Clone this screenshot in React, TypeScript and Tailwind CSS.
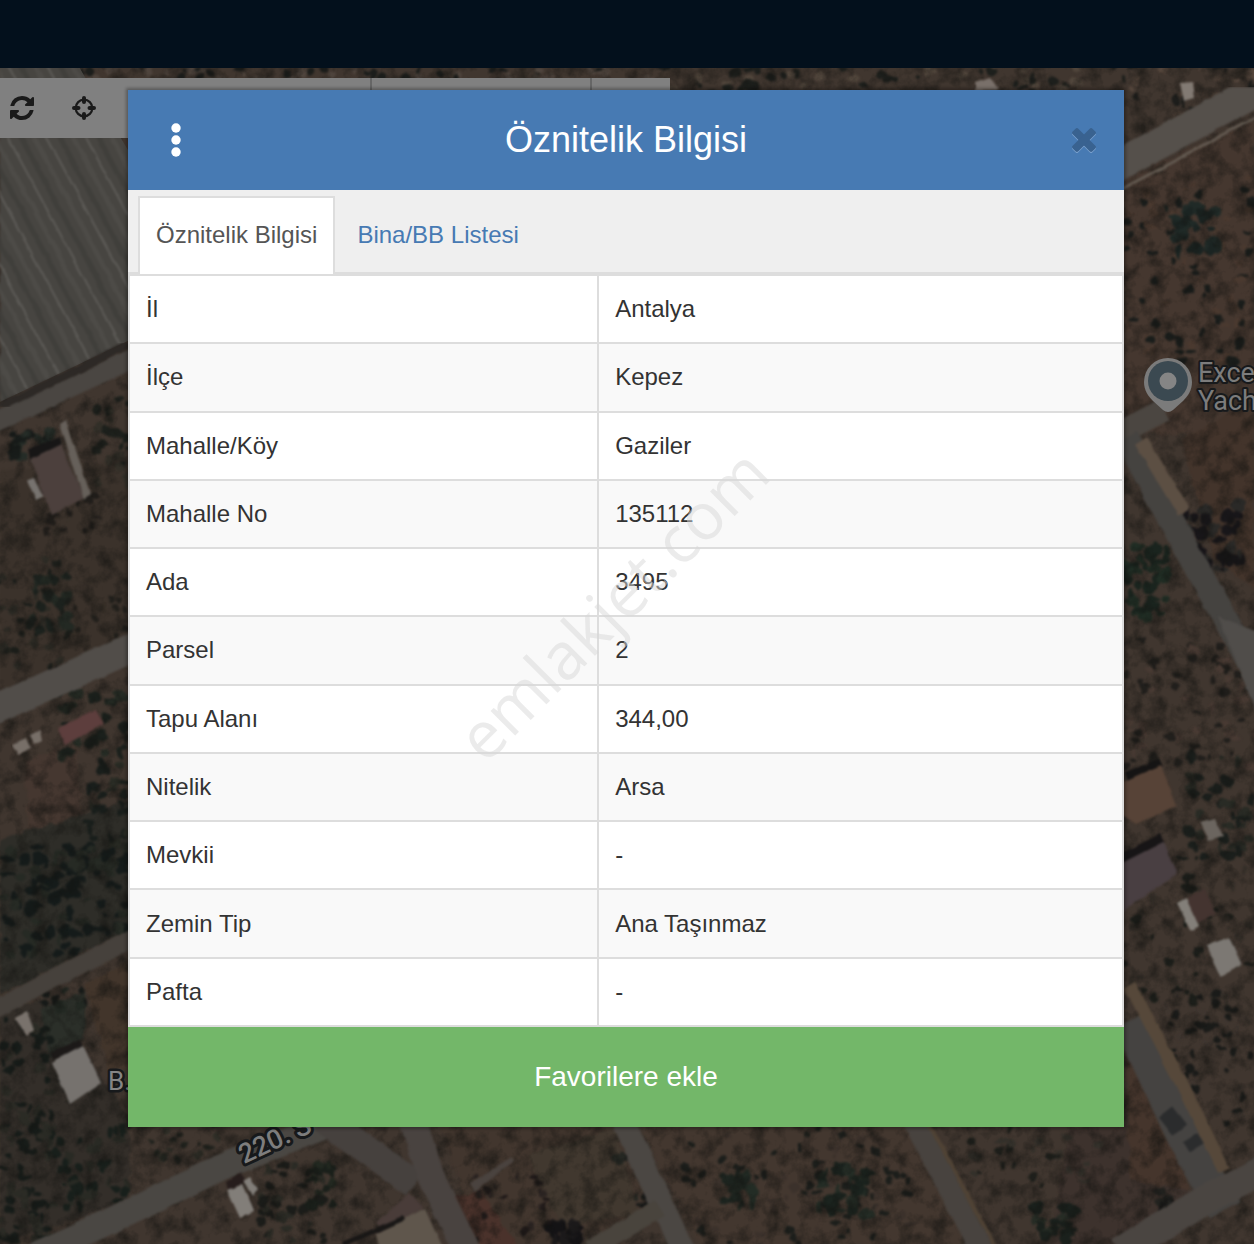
/**
 * Parcel query — attribute dialog shown over the satellite map
 */

import React, { useState } from "react";

interface Attribute {
  label: string;
  value: string;
}

const ATTRIBUTES: Attribute[] = [
  { label: "İl",          value: "Antalya" },
  { label: "İlçe",        value: "Kepez" },
  { label: "Mahalle/Köy", value: "Gaziler" },
  { label: "Mahalle No",  value: "135112" },
  { label: "Ada",         value: "3495" },
  { label: "Parsel",      value: "2" },
  { label: "Tapu Alanı",  value: "344,00" },
  { label: "Nitelik",     value: "Arsa" },
  { label: "Mevkii",      value: "-" },
  { label: "Zemin Tip",   value: "Ana Taşınmaz" },
  { label: "Pafta",       value: "-" },
];

const TABS = ["Öznitelik Bilgisi", "Bina/BB Listesi"];

/* ── Map scenery ─────────────────────────────────────────── */

// Small deterministic generator so the orchards look the same on every render
const makeRandom = (seed: number) => () => {
  seed = (seed * 1664525 + 1013904223) % 4294967296;
  return seed / 4294967296;
};

// [x, y, width, height, tree count, max radius, dark, light]
type Grove = [number, number, number, number, number, number, string, string];

const GROVES: Grove[] = [
  [75, 66, 600, 26, 90, 7, "#1b1d1b", "#4e443d"],
  [670, 66, 454, 26, 50, 7, "#1d1f1c", "#51463c"],
  [1124, 66, 130, 60, 25, 7, "#1d1d1b", "#55463c"],
  [1124, 175, 130, 190, 85, 6, "#1a1d1b", "#4a392f"],
  [1165, 200, 50, 55, 28, 9, "#1b2422", "#202a27"],
  [1185, 505, 55, 65, 40, 9, "#181619", "#2a2927"],
  [1124, 545, 45, 80, 40, 8, "#1a241e", "#202d24"],
  [1124, 640, 130, 130, 70, 6, "#211f1c", "#483a33"],
  [1180, 755, 74, 110, 45, 7, "#1b1f1c", "#292b25"],
  [1124, 855, 130, 150, 60, 6, "#1c1e1a", "#342e28"],
  [1165, 985, 89, 140, 55, 6, "#1a1b19", "#3f3630"],
  [5, 430, 50, 30, 25, 7, "#181c1a", "#252c27"],
  [95, 395, 35, 90, 22, 7, "#1d201c", "#322f28"],
  [45, 492, 55, 45, 22, 5, "#201d1a", "#3a322b"],
  [0, 560, 70, 110, 40, 6, "#1d1f1b", "#2d2b25"],
  [30, 575, 40, 55, 25, 7, "#1c211d", "#232923"],
  [70, 590, 58, 50, 14, 5, "#211f1b", "#3a3129"],
  [55, 690, 73, 70, 30, 8, "#1b201c", "#252b24"],
  [85, 750, 43, 100, 26, 7, "#191e1b", "#2a2c25"],
  [0, 845, 128, 110, 120, 8, "#151b1a", "#262a24"],
  [0, 1020, 50, 224, 90, 7, "#171c19", "#2b2b25"],
  [45, 990, 40, 20, 12, 6, "#171a18", "#222822"],
  [45, 1125, 85, 85, 45, 7, "#181f1b", "#292a24"],
  [150, 1120, 70, 40, 16, 6, "#20221d", "#2f2e27"],
  [260, 1165, 65, 79, 38, 7, "#1b1c19", "#2b2b25"],
  [310, 1160, 22, 45, 18, 7, "#1a1f1a", "#222820"],
  [470, 1175, 80, 69, 18, 6, "#201a19", "#2a2321"],
  [550, 1222, 30, 22, 24, 8, "#141315", "#1c1a1b"],
  [616, 1148, 14, 16, 7, 6, "#1a1c1a", "#252722"],
  [636, 1196, 20, 14, 7, 6, "#181a19", "#252722"],
  [680, 1128, 230, 116, 90, 6, "#1c1e1b", "#3b312b"],
  [725, 1175, 30, 30, 16, 9, "#1d241f", "#232c25"],
  [820, 1165, 50, 50, 32, 9, "#1b231e", "#242c25"],
  [970, 1128, 130, 60, 26, 6, "#1e1f1b", "#33302a"],
  [1030, 1205, 45, 39, 24, 8, "#1a201c", "#262c25"],
  [1158, 1190, 14, 22, 10, 7, "#171716", "#22221f"],
];

const trees = GROVES.flatMap(([x, y, w, h, count, size, dark, light], i) => {
  const rnd = makeRandom(i * 97 + 13);
  return Array.from({ length: count }, () => ({
    cx: Math.round(x + rnd() * w),
    cy: Math.round(y + rnd() * h),
    rx: 2 + rnd() * (size - 2),
    ry: 2 + rnd() * (size - 3),
    fill: rnd() > 0.4 ? dark : light,
  }));
});

const STRIPES = Array.from({ length: 26 }, (_, i) => -190 + i * 13);

const MapScene: React.FC = () => (
  <svg
    className="absolute inset-0 h-full w-full"
    viewBox="0 0 1254 1244"
    preserveAspectRatio="xMidYMin slice"
    aria-hidden="true"
  >
    <defs>
      <filter id="foliage" x="0" y="0" width="100%" height="100%" colorInterpolationFilters="sRGB">
        <feTurbulence type="fractalNoise" baseFrequency="0.09" numOctaves="2" seed="4" result="noise" />
        <feDisplacementMap in="SourceGraphic" in2="noise" scale="8" xChannelSelector="R" yChannelSelector="G" result="rough" />
        <feGaussianBlur in="rough" stdDeviation="1.2" />
      </filter>
      <filter id="soft" x="0" y="0" width="100%" height="100%" colorInterpolationFilters="sRGB">
        <feTurbulence type="fractalNoise" baseFrequency="0.05" numOctaves="2" seed="7" result="noise" />
        <feDisplacementMap in="SourceGraphic" in2="noise" scale="4" xChannelSelector="R" yChannelSelector="G" result="rough" />
        <feGaussianBlur in="rough" stdDeviation="1" />
      </filter>
      <filter id="grain" x="0" y="0" width="100%" height="100%" colorInterpolationFilters="sRGB">
        <feTurbulence type="fractalNoise" baseFrequency="0.06" numOctaves="4" seed="9" />
        <feColorMatrix values="0 0 0 0 0.07  0 0 0 0 0.07  0 0 0 0 0.06  2.2 0 0 0 -0.9" />
      </filter>
      <clipPath id="greenhouse">
        <path d="M0 60H75L122 140L134 160V338L0 402Z" />
      </clipPath>
    </defs>

    <rect width="1254" height="1244" fill="#40362f" />

    <g filter="url(#foliage)">
      {/* Bare fields */}
      <path d="M0 470L130 460V640L0 700Z" fill="#3b322b" />
      <path d="M25 760L75 745L85 840L30 850Z" fill="#453730" />
      <path d="M0 840L130 800V930L0 995Z" fill="#2e2d28" />
      <path d="M0 1010L50 1000L130 1120V1200L0 1244Z" fill="#332e29" />
      <path d="M85 985L130 960V1070H108Z" fill="#42352b" />
      <path d="M40 1010L85 992V1040L50 1058Z" fill="#2b2f29" />
      <path d="M1124 180L1254 120V440L1124 430Z" fill="#45372f" />
      <path d="M1180 440L1254 400V590L1215 560Z" fill="#43342b" />
      <path d="M440 1125H620L660 1210L560 1244H480Z" fill="#42362e" />
      <path d="M528 1155L615 1128L640 1215L560 1225Z" fill="#41382f" />
      <path d="M445 1200L480 1190L520 1250H475Z" fill="#4a322b" />
      <path d="M640 1125H910L985 1244H700Z" fill="#43372f" />
      <path d="M1070 1125H1160L1195 1210L1110 1244H1050Z" fill="#3d322d" />
      <path d="M1125 1050L1150 1090L1190 1190L1130 1180Z" fill="#45352c" />

      {trees.map((t, i) => (
        <ellipse key={i} cx={t.cx} cy={t.cy} rx={t.rx} ry={t.ry} fill={t.fill} />
      ))}
    </g>
    <rect width="1254" height="1244" filter="url(#grain)" opacity="0.6" />

    {/* Roads */}
    <g fill="none" filter="url(#soft)">
      <path d="M-10 424L136 357" stroke="#4a4642" strokeWidth="20" />
      <path d="M-10 712L136 646" stroke="#514d49" strokeWidth="29" />
      <path d="M-10 1012L60 975L136 937" stroke="#46413c" strokeWidth="18" />
      <path d="M20 1262L110 1221L220 1168L335 1122" stroke="#4a4743" strokeWidth="26" />
      <path d="M322 1118L415 1184" stroke="#46413e" strokeWidth="28" />
      <path d="M412 1118L432 1180L470 1256" stroke="#494340" strokeWidth="27" />
      <path d="M622 1118L655 1190L686 1256" stroke="#4b4743" strokeWidth="23" />
      <path d="M660 1208L590 1250" stroke="#49443d" strokeWidth="18" />
      <path d="M912 1118L985 1256" stroke="#48433f" strokeWidth="22" />
      <path d="M926 1118L1000 1256" stroke="#504335" strokeWidth="4" />
      <path d="M1110 170L1264 87" stroke="#55504b" strokeWidth="31" />
      <path d="M1120 190L1264 113" stroke="#625950" strokeWidth="3" />
      <path d="M1110 438L1164 410" stroke="#4b4641" strokeWidth="23" />
      <path d="M1126 437L1190 556L1264 688" stroke="#454340" strokeWidth="25" />
      <path d="M1141 441L1184 512" stroke="#5c4f43" strokeWidth="14" />
      <path d="M1130 1020L1186 1140L1225 1210" stroke="#454341" strokeWidth="35" />
      <path d="M1130 985L1180 1080L1224 1170" stroke="#56483a" strokeWidth="13" />
      <path d="M1264 1170L1205 1200L1120 1252" stroke="#4a4541" strokeWidth="30" />
      <path d="M1166 1112L1180 1130M1190 1138L1196 1148" stroke="#2b2c2d" strokeWidth="18" />
    </g>

    {/* Greenhouse roof */}
    <g clipPath="url(#greenhouse)">
      <g filter="url(#soft)">
        <rect y="56" width="144" height="356" fill="#474541" />
        {STRIPES.map((x, i) => (
          <path
            key={x}
            d={`M${x} 60L${x + 195} 420`}
            stroke={i % 3 === 0 ? "#64625e" : i % 3 === 1 ? "#3e3d3a" : "#4f4d49"}
            strokeWidth={i % 3 === 0 ? 2 : 5}
            opacity="0.75"
          />
        ))}
      </g>
    </g>
    <path d="M0 407L75 371L130 343" stroke="#2d2926" strokeWidth="8" fill="none" filter="url(#soft)" />

    {/* Buildings */}
    <g filter="url(#soft)">
      <path d="M28 449L60 437L62 445L30 459Z" fill="#171616" />
      <path d="M30 459L61 444L84 498L52 515Z" fill="#4c403d" />
      <path d="M60 424L66 420L90 493L84 500Z" fill="#66605a" />
      <path d="M27 480L34 478L44 496L36 500Z" fill="#77736f" />
      <path d="M58 728L96 710L104 724L65 745Z" fill="#5d3e3d" />
      <path d="M12 744L26 738L31 749L18 755ZM30 735L40 730L42 741L34 745Z" fill="#776f68" />
      <path d="M50 1052L80 1040L84 1047L54 1060Z" fill="#1c1918" />
      <path d="M51 1062L83 1045L101 1083L70 1104Z" fill="#76726e" />
      <path d="M14 1017L27 1011L34 1030L27 1036Z" fill="#79726c" />
      <path d="M226 1182L242 1172L246 1182L228 1190Z" fill="#261d1c" />
      <path d="M227 1190L242 1184L254 1211L240 1218ZM243 1180L250 1176L258 1189L252 1196Z" fill="#827e79" />
      <path d="M376 1222L410 1193L424 1208L382 1232Z" fill="#493c39" />
      <path d="M376 1234L425 1208L444 1250H380Z" fill="#5f564c" />
      <path d="M344 1244L404 1218" stroke="#191716" strokeWidth="5" />
      <path d="M470 1183L512 1158L514 1162L474 1192Z" fill="#4a433f" />
      <path d="M1125 772L1159 759L1163 766L1128 781Z" fill="#151414" />
      <path d="M1122 782L1161 765L1177 806L1136 824L1122 815Z" fill="#574337" />
      <path d="M1122 853L1160 834L1164 842L1122 863Z" fill="#171516" />
      <path d="M1122 863L1163 842L1177 873L1122 912Z" fill="#493f42" />
      <path d="M1186 898L1205 888L1216 914L1198 923Z" fill="#443430" />
      <path d="M1177 903L1186 898L1199 926L1191 931Z" fill="#837f79" />
      <path d="M1206 946L1229 937L1242 965L1220 977Z" fill="#7c7873" />
      <path d="M1200 822L1215 818L1223 836L1209 840Z" fill="#6b655f" />
      <path d="M1218 616L1260 632V722Z" fill="#504d4a" />
      <path d="M975 82L990 77L999 90H975Z" fill="#79706a" />
      <path d="M1180 84L1192 83L1194 98L1184 101Z" fill="#827a73" />
    </g>

    {/* Place labels */}
    <g fontFamily="Roboto, sans-serif" stroke="#17191b" paintOrder="stroke" strokeLinejoin="round">
      <text x="108" y="1090" fontSize="26" fill="#858585" strokeWidth="5">B.</text>
      <text
        x="244" y="1164" fontSize="27" fontWeight="500" fill="#7d7d7d" strokeWidth="6"
        transform="rotate(-25 244 1164)"
      >
        220. S
      </text>
      <text x="1198" y="382" fontSize="27" fill="#7c7c7c" strokeWidth="4">Exce</text>
      <text x="1198" y="410" fontSize="27" fill="#7c7c7c" strokeWidth="4">Yach</text>
    </g>
    <path
      d="M1168 358a24 24 0 0 1 24 24c0 8-4 14-9 19l-10 9q-5 4-10 0l-10-9c-5-5-9-11-9-19a24 24 0 0 1 24-24z"
      fill="#7b7b7b"
    />
    <circle cx="1168" cy="381" r="20" fill="#3b4951" />
    <circle cx="1168" cy="381" r="8.500" fill="#858585" />
  </svg>
);

/* ── Icons ───────────────────────────────────────────────── */

const RefreshIcon = () => (
  <svg viewBox="0 0 1536 1536" className="size-6" fill="currentColor">
    <path d="M1511 928q0 5-1 7-64 268-268 434.5t-478 166.5q-146 0-282.5-55t-243.5-157l-129 129q-19 19-45 19t-45-19-19-45v-448q0-26 19-45t45-19h448q26 0 45 19t19 45-19 45l-137 137q71 66 161 102t187 36q134 0 250-65t186-179q11-17 53-117 8-23 30-23h192q13 0 22.500 9.500t9.500 22.500zM1536 128v448q0 26-19 45t-45 19h-448q-26 0-45-19t-19-45 19-45l138-138q-148-137-349-137-134 0-250 65t-186 179q-11 17-53 117-8 23-30 23h-199q-13 0-22.500-9.500t-9.500-22.500v-7q65-268 270-434.500t480-166.500q146 0 284 55.500t245 156.500l130-129q19-19 45-19t45 19 19 45z" />
  </svg>
);

const LocateIcon = () => (
  <svg viewBox="0 0 24 24" className="size-6" fill="none" stroke="currentColor">
    <circle cx="12" cy="12" r="8.300" strokeWidth="2.200" />
    <path d="M12 2v4M12 18v4M2 12h4.500M17.500 12h4.500" strokeWidth="4" strokeLinecap="round" />
  </svg>
);

const DotsIcon = () => (
  <svg viewBox="0 0 10 34" className="h-[34px] w-[10px]" fill="currentColor">
    <circle cx="5" cy="5" r="4.700" />
    <circle cx="5" cy="17" r="4.700" />
    <circle cx="5" cy="29" r="4.700" />
  </svg>
);

const CloseIcon = () => (
  <svg viewBox="0 0 24 26" className="h-[26px] w-6">
    <g fill="#7da3cf">
      <rect x="-2" y="10" width="28" height="8" rx="2" transform="rotate(45 12 14)" />
      <rect x="-2" y="10" width="28" height="8" rx="2" transform="rotate(-45 12 14)" />
    </g>
    <g fill="#396290">
      <rect x="-2" y="9" width="28" height="8" rx="2" transform="rotate(45 12 13)" />
      <rect x="-2" y="9" width="28" height="8" rx="2" transform="rotate(-45 12 13)" />
    </g>
  </svg>
);

/* ── Page ────────────────────────────────────────────────── */

const MapBackdrop: React.FC = () => (
  <div className="absolute inset-0 overflow-hidden">
    <MapScene />
    <header className="relative h-[68px] bg-[#03101c]" />
    <div className="relative mt-[10px] flex h-[60px] w-[670px] max-w-full bg-[#808080] text-[#1a1a1a]">
      <div className="flex w-[370px] items-center">
        <button type="button" aria-label="Yenile" className="flex w-11 justify-center">
          <RefreshIcon />
        </button>
        <button type="button" aria-label="Konum" className="ml-5 flex w-10 justify-center">
          <LocateIcon />
        </button>
      </div>
      <div className="w-[220px] border-l-2 border-[#666]" />
      <div className="flex-1 border-l-2 border-[#666]" />
    </div>
  </div>
);

const App: React.FC = () => {
  const [activeTab, setActiveTab] = useState(TABS[0]);

  return (
    <div className="relative min-h-screen overflow-hidden font-['Liberation_Sans',Arial,sans-serif]">
      <MapBackdrop />

      <div className="relative pt-[90px] pr-[130px] pb-[117px] pl-32">
        <section
          role="dialog"
          aria-labelledby="dialog-title"
          className="relative bg-white text-2xl text-[#333] shadow-[0_0_3px_2px_rgba(0,0,0,0.3)]"
        >
          <div className="flex h-[100px] items-center justify-between bg-[#477ab3] px-7 text-white">
            <button type="button" aria-label="Menü" className="flex w-10 justify-center">
              <DotsIcon />
            </button>
            <h1 id="dialog-title" className="text-4xl font-normal">Öznitelik Bilgisi</h1>
            <button type="button" aria-label="Kapat" className="flex w-10 justify-end">
              <CloseIcon />
            </button>
          </div>

          {/* Tabs */}
          <div role="tablist" className="flex h-[84px] border-b-2 border-[#ddd] bg-[#efefef] pt-[6px] pl-[10px]">
            {TABS.map((tab) => (
              <button
                key={tab}
                type="button"
                role="tab"
                aria-selected={tab === activeTab}
                onClick={() => setActiveTab(tab)}
                className={`-mb-[2px] mr-1 border-2 border-b-0 px-4 pb-[2px] whitespace-nowrap
                            ${tab === activeTab
                              ? "border-[#ddd] bg-white text-[#555]"
                              : "border-transparent text-[#477ab3]"}`}
              >
                {tab}
              </button>
            ))}
          </div>

          {/* Attributes */}
          <table className="h-[753px] w-full border-collapse">
            <tbody>
              {ATTRIBUTES.map((a) => (
                <tr key={a.label} className="even:bg-[#f9f9f9]">
                  <th scope="row" className="w-[47.2%] border-2 border-[#ddd] px-4 text-left font-normal">
                    {a.label}
                  </th>
                  <td className="border-2 border-[#ddd] px-4">{a.value}</td>
                </tr>
              ))}
            </tbody>
          </table>

          <button type="button" className="h-[100px] w-full bg-[#73b769] text-[28px] text-white">
            Favorilere ekle
          </button>

          <span
            className="pointer-events-none absolute top-[514px] left-[484px] -translate-x-1/2 -translate-y-1/2
                       -rotate-45 font-['Open_Sans',sans-serif] text-[65px] leading-none text-[#d7d7d7]/50"
          >
            emlakjet.com
          </span>
        </section>
      </div>
    </div>
  );
};

export default App;
